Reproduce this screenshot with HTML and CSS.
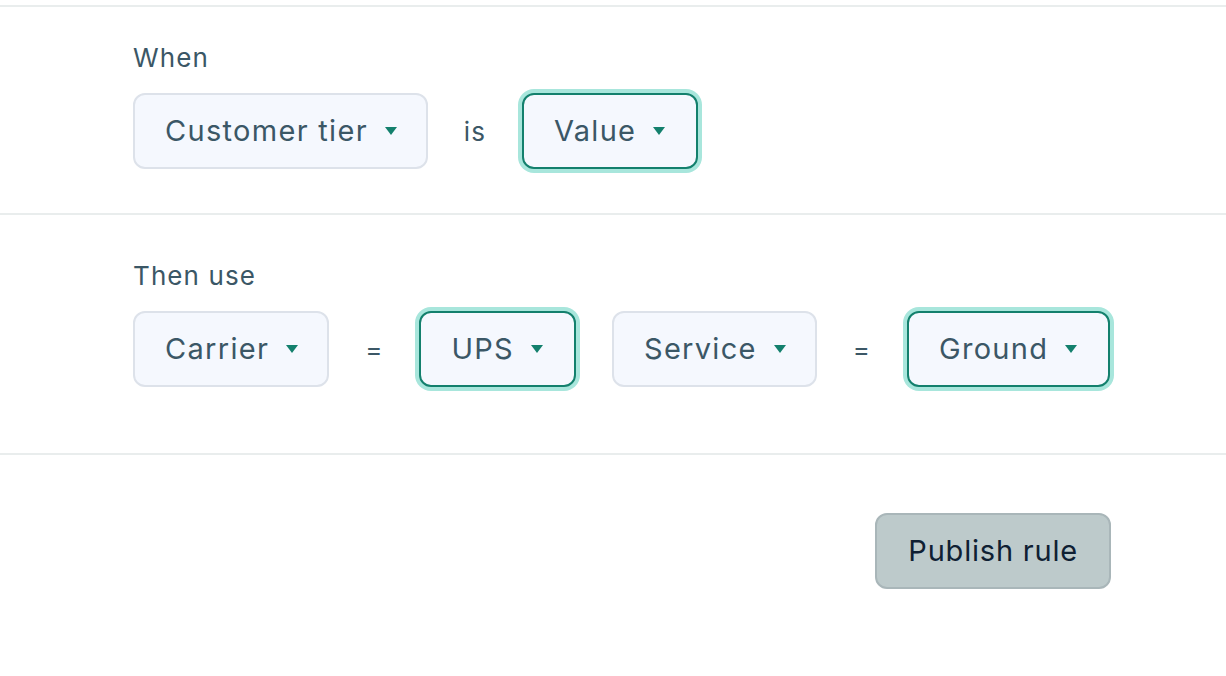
FILE: index.html
```html
<!DOCTYPE html>
<html lang="en">
  <head>
    <meta charset="UTF-8" />
    <meta name="viewport" content="width=device-width, initial-scale=1.0" />
    <title>Routing rule</title>
    <link rel="stylesheet" href="styles.css">
  </head>
  <body>
    <section class="block block-when">
      <div class="label">When</div>
      <div class="row">
        <button class="pick">Customer tier <span class="caret"></span></button>
        <span class="op">is</span>
        <button class="pick focus">Value <span class="caret"></span></button>
      </div>
    </section>

    <section class="block block-then">
      <div class="label">Then use</div>
      <div class="row">
        <button class="pick">Carrier <span class="caret"></span></button>
        <span class="op">=</span>
        <button class="pick focus">UPS <span class="caret"></span></button>
        <button class="pick">Service <span class="caret"></span></button>
        <span class="op">=</span>
        <button class="pick focus">Ground <span class="caret"></span></button>
      </div>
    </section>

    <div class="footer">
      <button class="publish">Publish rule</button>
    </div>
  </body>
</html>
```

FILE: styles.css
```css
body {
  margin: 0;
  font-family: Inter, "Open Sans", sans-serif;
  color: #3b5766;
  background: #fff;
}
.block {
  border-top: 2px solid #e9eded;
  padding: 36px 115px 44px 133px;
}
.block:first-child {
  margin-top: 5px;
}
.block-then {
  padding-top: 46px;
  padding-bottom: 66px;
}
.label {
  font-size: 26px;
  line-height: 30px;
  letter-spacing: 1.1px;
  margin-bottom: 20px;
}
.row {
  display: flex;
  align-items: center;
  gap: 36px;
}
.pick {
  font-family: inherit;
  font-size: 29px;
  line-height: 34px;
  letter-spacing: 1.3px;
  color: #3b5766;
  background: #f5f8fe;
  border: 2px solid #dde2ea;
  border-radius: 12px;
  padding: 19px 29px 19px 30px;
  display: flex;
  align-items: center;
  gap: 17px;
  cursor: pointer;
}
.pick.focus {
  border-color: #13806d;
  box-shadow: 0 0 0 4px #a8e6dc;
  padding-right: 31px;
}
.caret {
  width: 0;
  height: 0;
  border-left: 6px solid transparent;
  border-right: 6px solid transparent;
  border-top: 8px solid #13806d;
}
.op {
  font-size: 26px;
  letter-spacing: 1px;
}
.footer {
  border-top: 2px solid #e9eded;
  display: flex;
  justify-content: flex-end;
  padding: 58px 115px 0 133px;
}
.publish {
  font-family: inherit;
  font-size: 29px;
  line-height: 34px;
  letter-spacing: 0.8px;
  color: #0f2033;
  background: #bdcacb;
  border: 2px solid #a9b6b9;
  border-radius: 12px;
  padding: 19px 31px;
}
```
